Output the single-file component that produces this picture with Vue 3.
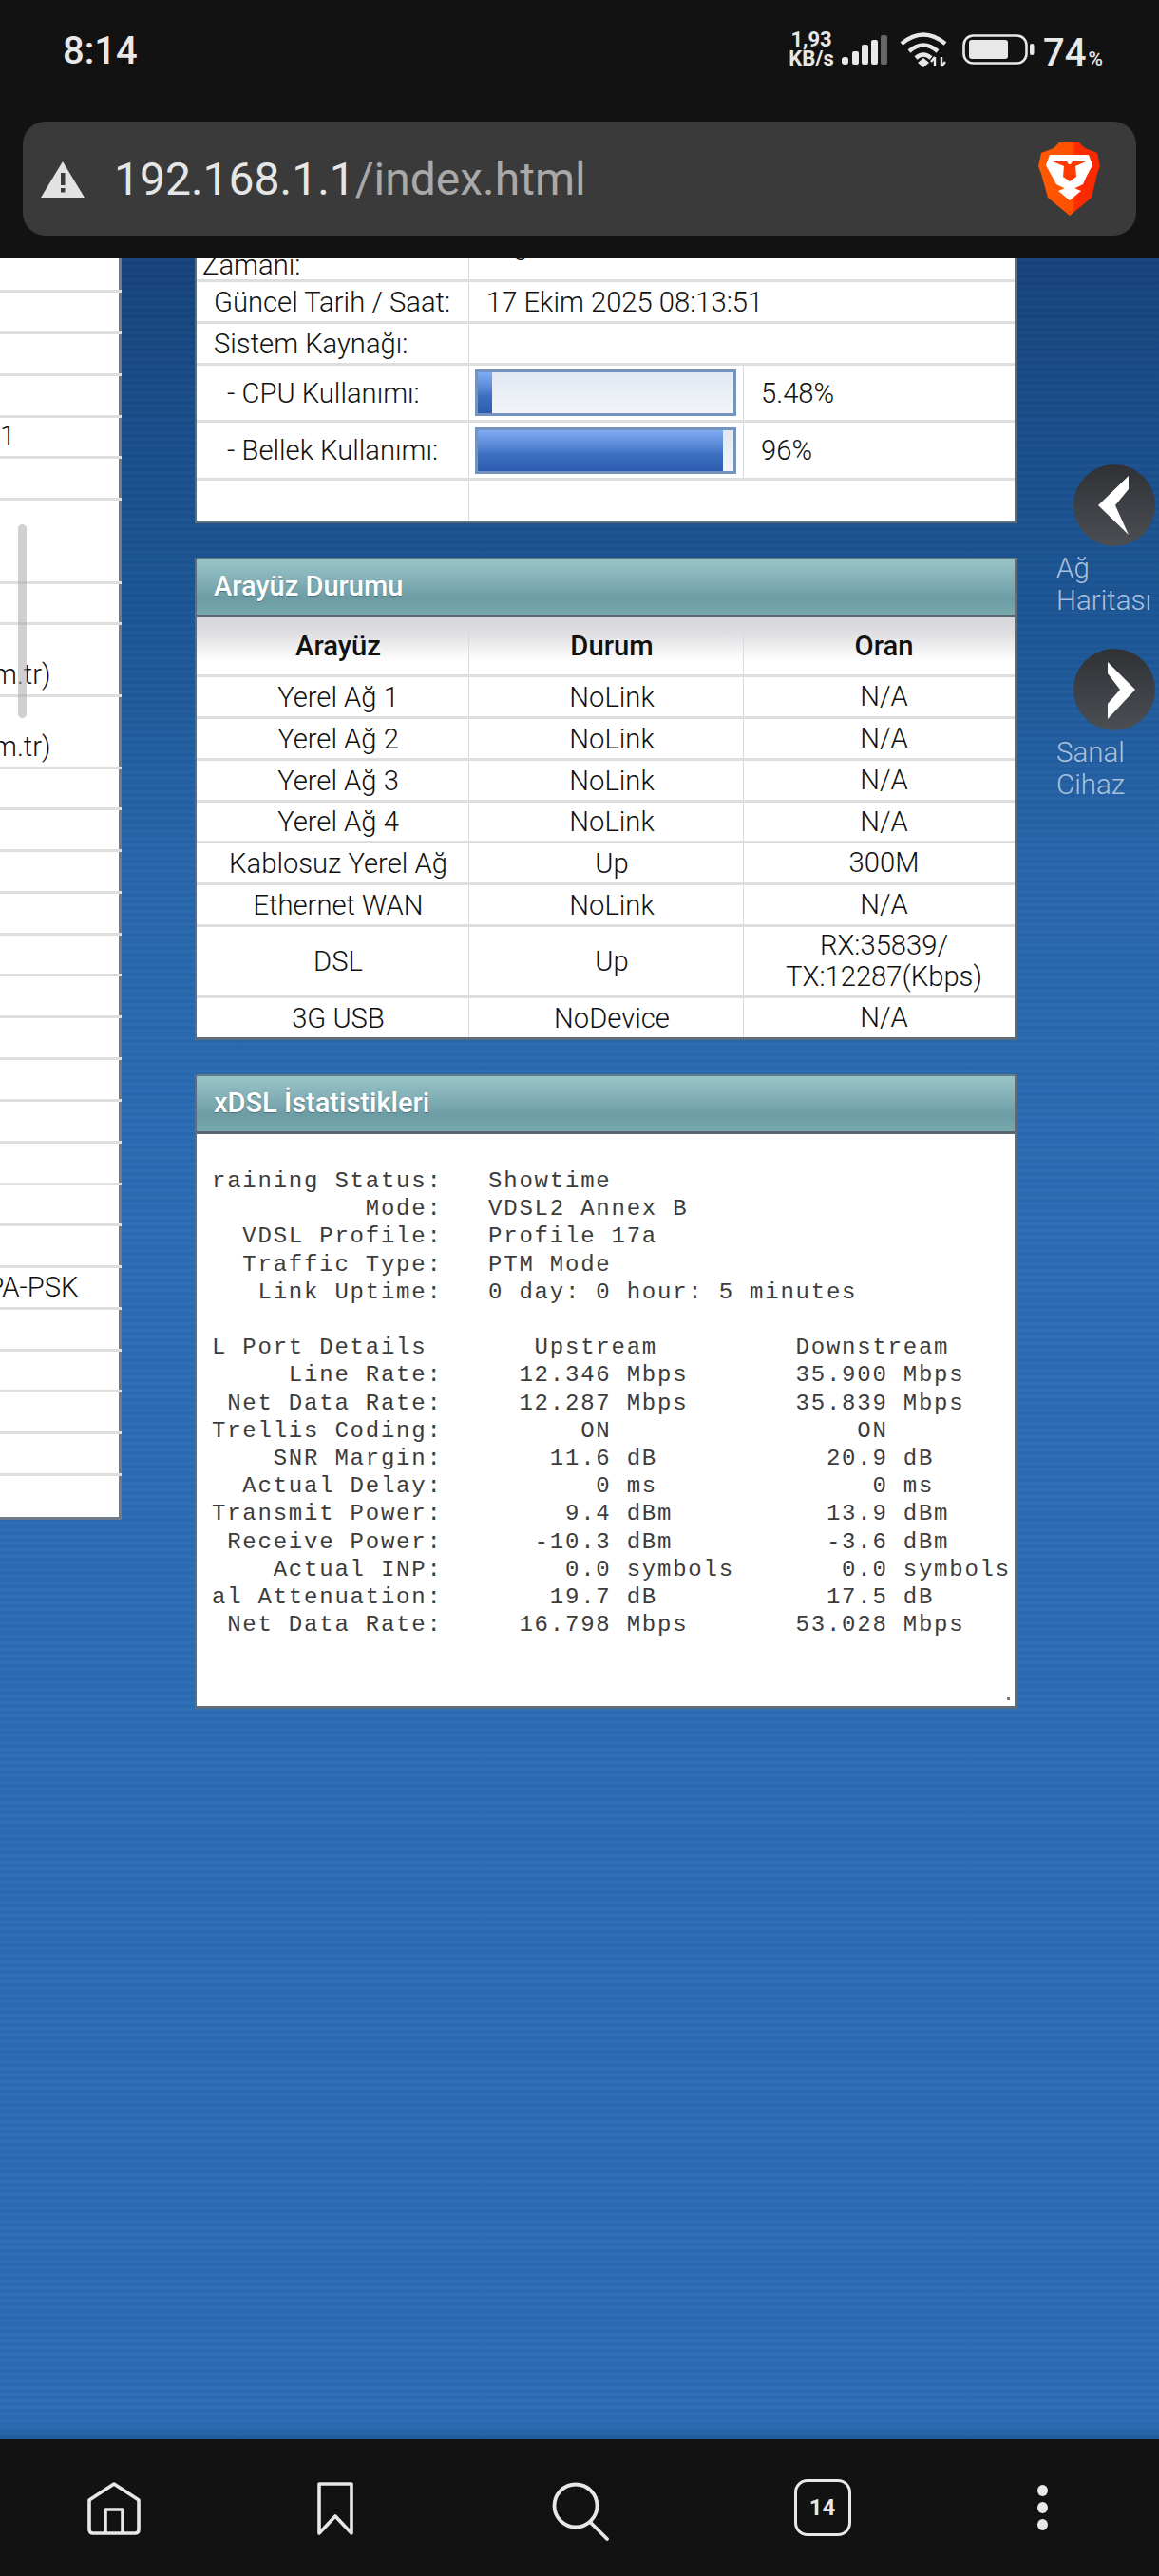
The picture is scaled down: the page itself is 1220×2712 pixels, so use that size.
<script setup>
const sideLines = [308,352,396,440,483,527,615,658,734,810,853,897,941,985,1028,1072,1116,1160,1204,1248,1291,1335,1379,1423,1466,1510,1554,1597]
const sideText = { 440: ['1', 0], 658: ['m.tr)', -8], 734: ['m.tr)', -8], 1335: ['WPA-PSK', -40] }
const sideRows = sideLines.map((y, i) => {
  const top = i ? sideLines[i - 1] : 272
  const t = sideText[top] || ['', 0]
  return { height: y - top, text: t[0], indent: t[1] }
})
const ifaceRows = [
  ['Yerel Ağ 1', 'NoLink', 'N/A', 'r44'],
  ['Yerel Ağ 2', 'NoLink', 'N/A', 'r44'],
  ['Yerel Ağ 3', 'NoLink', 'N/A', 'r44'],
  ['Yerel Ağ 4', 'NoLink', 'N/A', 'r43'],
  ['Kablosuz Yerel Ağ', 'Up', '300M', 'r44'],
  ['Ethernet WAN', 'NoLink', 'N/A', 'r44'],
  ['DSL', 'Up', 'RX:35839/\nTX:12287(Kbps)', 'r75'],
  ['3G USB', 'NoDevice', 'N/A', 'r41']
]
const dsl = `raining Status:   Showtime
          Mode:   VDSL2 Annex B
  VDSL Profile:   Profile 17a
  Traffic Type:   PTM Mode
   Link Uptime:   0 day: 0 hour: 5 minutes

L Port Details       Upstream         Downstream
     Line Rate:     12.346 Mbps       35.900 Mbps
 Net Data Rate:     12.287 Mbps       35.839 Mbps
Trellis Coding:         ON                ON
    SNR Margin:       11.6 dB           20.9 dB
  Actual Delay:          0 ms              0 ms
Transmit Power:        9.4 dBm          13.9 dBm
 Receive Power:      -10.3 dBm          -3.6 dBm
    Actual INP:        0.0 symbols       0.0 symbols
al Attenuation:       19.7 dB           17.5 dB
 Net Data Rate:     16.798 Mbps       53.028 Mbps`
</script>

<template>
  <div class="screen">
    <header class="topbar">
      <div class="status">
        <span class="time">8:14</span>
        <div class="status-right">
          <div class="speed"><span>1,93</span><span>KB/s</span></div>
          <svg class="signal" width="48" height="31" viewBox="0 0 48 31">
            <rect x="0" y="23" width="7" height="8" rx="3" fill="#e8e8e8" />
            <rect x="11" y="17" width="7" height="14" rx="2" fill="#e8e8e8" />
            <rect x="21" y="10" width="7" height="21" rx="2" fill="#e8e8e8" />
            <rect x="31" y="5" width="7" height="26" rx="2" fill="#e8e8e8" />
            <rect x="41" y="0" width="7" height="31" rx="2" fill="#666" />
          </svg>
          <svg class="wifi" width="50" height="38" viewBox="0 0 50 38" fill="none" stroke="#e8e8e8" stroke-width="4.4">
            <path d="M2 13 Q25 -6 48 13" />
            <path d="M10 21 Q25 8 40 21" />
            <path d="M17 28 Q25 21 33 28" />
            <path d="M25 28 L31 33 L25 38 L19 33 Z" fill="#e8e8e8" stroke="none" />
            <path d="M37 27 V37 M37 27 L33 32 M44 37 V27 M44 37 L48 32" stroke-width="2.4" />
          </svg>
          <svg class="battery" width="76" height="32" viewBox="0 0 76 32">
            <rect x="1.5" y="1.5" width="66" height="29" rx="10" fill="none" stroke="#e8e8e8" stroke-width="2.6" />
            <rect x="7" y="6" width="41" height="20" rx="3" fill="#e8e8e8" />
            <rect x="71" y="10" width="4.5" height="12" rx="2" fill="#e8e8e8" />
          </svg>
          <span class="pct">74<small>%</small></span>
        </div>
      </div>
      <div class="urlbar">
        <svg class="warn" width="46" height="38" viewBox="0 0 46 38">
          <path d="M23 0 L46 38 H0 Z" fill="#e2e2e2" />
          <rect x="21" y="12" width="4.5" height="13" fill="#3a3a3a" />
          <rect x="21" y="28" width="4.5" height="4.5" fill="#3a3a3a" />
        </svg>
        <span class="url"><b>192.168.1.1</b>/index.html</span>
        <svg class="brave" width="65" height="77" viewBox="0 0 65 77">
          <defs>
            <linearGradient id="brv" x1="0" x2="1" y1="0" y2="0">
              <stop offset="0" stop-color="#ff5a00" />
              <stop offset="0.55" stop-color="#ff5000" />
              <stop offset="0.6" stop-color="#ff2a00" />
              <stop offset="1" stop-color="#f52a00" />
            </linearGradient>
          </defs>
          <path d="M22 0 H43 L49 6 L62 11 L65 25 L62 33 L56 58 L33 77 L10 58 L3 33 L0 25 L3 11 L16 6 Z" fill="url(#brv)" />
          <path d="M12 13 H53 L57 24 L51 35 L47 44 L39 48 H27 L19 44 L14 35 L8 24 Z" fill="#fff" />
          <path d="M15 20 H30 L32 23 L34 23 L36 20 H50 L39 25 L40 36 L33 41 L26 36 L27 25 Z" fill="#ff3a00" />
          <path d="M21 51 L33 46 L45 51 L33 61 Z" fill="#fff" />
        </svg>
      </div>
    </header>

    <main class="viewport">
      <aside class="side">
        <div v-for="(r, i) in sideRows" :key="i" class="side-row" :style="{ height: r.height + 'px', textIndent: r.indent + 'px' }">{{ r.text }}</div>
        <i class="thumb"></i>
      </aside>

      <div class="col">
        <section class="panel">
          <div class="row r25">
            <div class="c1 clipped">Zamanı:</div>
            <div class="c2w clipped-g">g</div>
          </div>
          <div class="row r44">
            <div class="c1 lbl">Güncel Tarih / Saat:</div>
            <div class="c2w val">17 Ekim 2025 08:13:51</div>
          </div>
          <div class="row r44">
            <div class="c1 lbl">Sistem Kaynağı:</div>
            <div class="c2w val"></div>
          </div>
          <div class="row r60">
            <div class="c1 lbl sub">- CPU Kullanımı:</div>
            <div class="c2 barcell"><div class="bar"><div class="fill cpu"></div></div></div>
            <div class="c3 val">5.48%</div>
          </div>
          <div class="row r61">
            <div class="c1 lbl sub">- Bellek Kullanımı:</div>
            <div class="c2 barcell"><div class="bar"><div class="fill mem"></div></div></div>
            <div class="c3 val">96%</div>
          </div>
          <div class="row r42 last">
            <div class="c1"></div>
            <div class="c2w"></div>
          </div>
        </section>

        <section class="panel gap">
          <h2 class="title">Arayüz Durumu</h2>
          <div class="row head">
            <div class="c1 ctr">Arayüz</div>
            <div class="c2 ctr">Durum</div>
            <div class="c3 ctr">Oran</div>
          </div>
          <div v-for="(r, i) in ifaceRows" :key="i" class="row" :class="[r[3], { last: i === ifaceRows.length - 1 }]">
            <div class="c1 ctr">{{ r[0] }}</div>
            <div class="c2 ctr">{{ r[1] }}</div>
            <div class="c3 ctr multi">{{ r[2] }}</div>
          </div>
        </section>

        <section class="panel gap dslpanel">
          <h2 class="title">xDSL İstatistikleri</h2>
          <pre class="dsl">{{ dsl }}</pre>
          <i class="grip"></i>
        </section>
      </div>

      <nav class="jump">
        <div class="jump-item first">
          <svg class="jump-btn" width="86" height="86" viewBox="0 0 86 86">
            <defs>
              <linearGradient id="bt" x1="0" x2="0" y1="0" y2="1">
                <stop offset="0" stop-color="#2f3135" />
                <stop offset="1" stop-color="#4b4f53" />
              </linearGradient>
            </defs>
            <circle cx="43" cy="43" r="43" fill="url(#bt)" />
            <path d="M26 43 L58 12 V26 L44 43 L58 74 Z" fill="#fff" />
          </svg>
          <span>Ağ<br />Haritası</span>
        </div>
        <div class="jump-item second">
          <svg class="jump-btn" width="86" height="86" viewBox="0 0 86 86">
            <circle cx="43" cy="43" r="43" fill="url(#bt)" />
            <path d="M36 14 L65 43 L36 74 V58 L49 43 L36 26 Z" fill="#fff" />
          </svg>
          <span>Sanal<br />Cihaz</span>
        </div>
      </nav>
    </main>

    <footer class="bottombar">
      <div class="slot">
        <svg width="56" height="56" viewBox="0 0 56 56" fill="none" stroke="#e8e8e8" stroke-width="3.6" stroke-linejoin="round">
          <path d="M28 2 L54 19 V50 Q54 54 50 54 H6 Q2 54 2 50 V19 Z" />
          <path d="M19 54 V29 H37 V54" />
        </svg>
      </div>
      <div class="slot">
        <svg width="38" height="56" viewBox="0 0 38 56" fill="none" stroke="#e8e8e8" stroke-width="3.6" stroke-linejoin="round">
          <path d="M2 2 H36 V54 L19 36 L2 54 Z" />
        </svg>
      </div>
      <div class="slot">
        <svg width="60" height="62" viewBox="0 0 60 62" fill="none" stroke="#e8e8e8" stroke-width="3.8" stroke-linecap="round">
          <circle cx="25" cy="25" r="22.5" />
          <path d="M41 43 L58 60" />
        </svg>
      </div>
      <div class="slot tabs"><span>14</span></div>
      <div class="slot dots"><i></i><i></i><i></i></div>
    </footer>
  </div>
</template>

<style scoped>
.screen {
  width: 1220px;
  height: 2712px;
  display: flex;
  flex-direction: column;
  overflow: hidden;
  font-family: Roboto, "Liberation Sans", sans-serif;
  background: #121212;
}
.topbar {
  height: 272px;
  flex: none;
  background: #121212;
  box-sizing: border-box;
}
.status {
  height: 128px;
  box-sizing: border-box;
  display: flex;
  justify-content: space-between;
  align-items: flex-start;
  padding: 30px 59px 0 66px;
  color: #e8e8e8;
}
.time {
  font-size: 40px;
  font-weight: 500;
  line-height: 48px;
}
.status-right {
  display: flex;
  align-items: flex-start;
  color: #e8e8e8;
}
.speed {
  display: flex;
  flex-direction: column;
  align-items: center;
  width: 46px;
  font-size: 22px;
  font-weight: 700;
  line-height: 20px;
  margin-top: 2px;
}
.signal { margin: 7px 0 0 9px; }
.wifi { margin: 3px 0 0 13px; }
.battery { margin: 6px 0 0 16px; }
.pct {
  margin-left: 9px;
  font-size: 40px;
  font-weight: 500;
  line-height: 50px;
  margin-top: 1px;
}
.pct small {
  font-size: 21px;
  font-weight: 500;
  margin-left: 2px;
}
.urlbar {
  margin: 0 24px;
  height: 120px;
  border-radius: 24px;
  background: #3a3a3a;
  display: flex;
  align-items: center;
  position: relative;
}
.warn { margin: 2px 0 0 19px; flex: none; }
.url {
  margin: 2px 0 0 31px;
  font-size: 48px;
  color: #a9a9a9;
  line-height: 56px;
}
.url b { font-weight: 400; color: #e6e6e6; }
.brave { margin-left: auto; margin-right: 38px; }

.viewport {
  flex: 1;
  min-height: 0;
  display: flex;
  align-items: flex-start;
  position: relative;
  overflow: hidden;
  background:
    repeating-linear-gradient(180deg, rgba(255,255,255,0.018) 0 3px, rgba(0,0,0,0.018) 3px 7px),
    linear-gradient(180deg, #15437a 0, #1a4f8d 200px, #1d5797 400px, #2866ac 650px, #2b6cb4 1000px, #2a6cb4 2280px, #1f5c9e 2296px);
}
.side {
  width: 128px;
  flex: none;
  box-sizing: border-box;
  background: #fff;
  border-right: 3px solid #6f7b86;
  border-bottom: 3px solid #6f7b86;
  position: relative;
}
.side-row {
  box-sizing: border-box;
  border-bottom: 3px solid #dedede;
  width: 128px;
  margin-right: -3px;
  display: flex;
  align-items: flex-end;
  line-height: 41px;
  overflow: hidden;
  white-space: nowrap;
  font-size: 29.2px;
  font-weight: 300;
  color: #111;
}
.side-row:last-of-type { border-bottom: 0; }
.thumb {
  position: absolute;
  left: 19px;
  top: 280px;
  width: 9px;
  height: 204px;
  border-radius: 5px;
  background: rgba(170,170,170,0.55);
}
.col {
  width: 866px;
  flex: none;
  margin-left: 77px;
}
.panel {
  box-sizing: border-box;
  background: #fff;
  border: 3px solid #5f6d78;
  border-left-width: 2px;
  border-top: 0;
  position: relative;
}
.gap {
  margin-top: 36px;
  border-top: 0;
}
.title {
  margin: 0;
  height: 63px;
  box-sizing: border-box;
  padding: 0 0 3px 18px;
  display: flex;
  align-items: center;
  font-size: 29px;
  font-weight: 500;
  color: #fff;
  text-shadow: 0 1px 1px rgba(40,70,80,0.5);
  border-top: 2px solid #5f7f88;
  border-bottom: 3px solid #59666e;
  background: linear-gradient(180deg, #98c3c9 0, #84b2b8 35%, #6d9ca4 70%, #77a9ae 100%);
}
.row {
  display: flex;
  box-sizing: border-box;
  border-bottom: 3px solid #dedede;
  font-size: 29.2px;
  font-weight: 300;
  color: #111;
}
.row.last { border-bottom: 0; }
.r25 { height: 25px; overflow: hidden; }
.r41 { height: 41px; }
.r42 { height: 42px; }
.r43 { height: 43px; }
.r44 { height: 44px; }
.r60 { height: 60px; }
.r61 { height: 61px; }
.r75 { height: 75px; }
.c1, .c2, .c3, .c2w {
  box-sizing: border-box;
  display: flex;
  align-items: center;
  height: 100%;
}
.c1 { width: 287px; border-right: 1px solid #d9d9e0; }
.c2 { width: 289px; border-right: 1px solid #d9d9e0; }
.c3 { flex: 1; min-width: 0; }
.c2w { flex: 1; min-width: 0; }
.lbl { padding-left: 18px; }
.sub { padding-left: 32px; }
.val { padding-left: 18px; }
.c3.val { padding-left: 18px; }
.ctr { justify-content: center; text-align: center; }
.c1.ctr { padding-left: 12px; }
.c2.ctr { padding-left: 12px; }
.c3.ctr { padding-left: 10px; }
.multi { white-space: pre-line; line-height: 33px; }
.clipped {
  padding-left: 6px;
  align-items: flex-end;
  line-height: 30px;
}
.clipped-g {
  padding-left: 46px;
  align-items: flex-start;
  line-height: 28px;
  margin-top: -28px;
  height: 28px;
}
.barcell { padding-left: 6px; padding-right: 7px; }
.bar {
  width: 100%;
  height: 49px;
  box-sizing: border-box;
  border: 3px solid #7593bf;
  background: linear-gradient(180deg, #e2e8f1, #f2f4f9);
}
.fill {
  height: 100%;
  background: linear-gradient(180deg, #7eabf3 0, #5c8bd8 35%, #3c6ec0 60%, #2d5cb0 100%);
}
.cpu { width: 5.48%; }
.mem { width: 96%; }
.head {
  height: 63px;
  background: linear-gradient(180deg, #d6d6da 0, #e0e0e3 30%, #f6f6f6 62%, #fff 80%);
}
.head .ctr { font-weight: 500; }
.dslpanel { height: 668px; }
.dsl {
  margin: 0;
  padding: 35px 0 0 16px;
  overflow: hidden;
  font-family: "Liberation Mono", monospace;
  font-size: 24px;
  letter-spacing: 1.77px;
  line-height: 29.2px;
  color: #3c3c3c;
}
.grip {
  position: absolute;
  right: 5px;
  bottom: 6px;
  width: 3px;
  height: 3px;
  background: #777;
}
.jump {
  flex: 1;
  min-width: 0;
  display: flex;
  flex-direction: column;
  font-size: 29.5px;
  font-weight: 300;
  line-height: 34px;
  color: #a9c2dc;
}
.jump-item { display: flex; flex-direction: column; }
.jump-item.first { margin-top: 217px; }
.jump-item.second { margin-top: 34px; }
.jump-btn { margin-left: 59px; margin-bottom: 6px; }
.jump-item span { margin-left: 41px; white-space: nowrap; }

.bottombar {
  height: 144px;
  flex: none;
  background: #121212;
  display: grid;
  grid-template-columns: 233px 233px 283px 227px 237px;
  padding-left: 3px;
  align-items: start;
}
.slot {
  display: flex;
  justify-content: center;
  padding-top: 45px;
}
.slot.tabs { padding-top: 0; }
.tabs span {
  margin-top: 42px;
  width: 60px;
  height: 60px;
  box-sizing: border-box;
  border: 3.6px solid #e8e8e8;
  border-radius: 14px;
  display: flex;
  align-items: center;
  justify-content: center;
  font-size: 24px;
  font-weight: 700;
  color: #e8e8e8;
}
.slot.dots {
  flex-direction: column;
  align-items: center;
  gap: 6px;
  padding-top: 48px;
}
.dots i {
  width: 11px;
  height: 12px;
  border-radius: 50%;
  background: #e8e8e8;
}
</style>

<style>
html, body { margin: 0; background: #121212; }
</style>
